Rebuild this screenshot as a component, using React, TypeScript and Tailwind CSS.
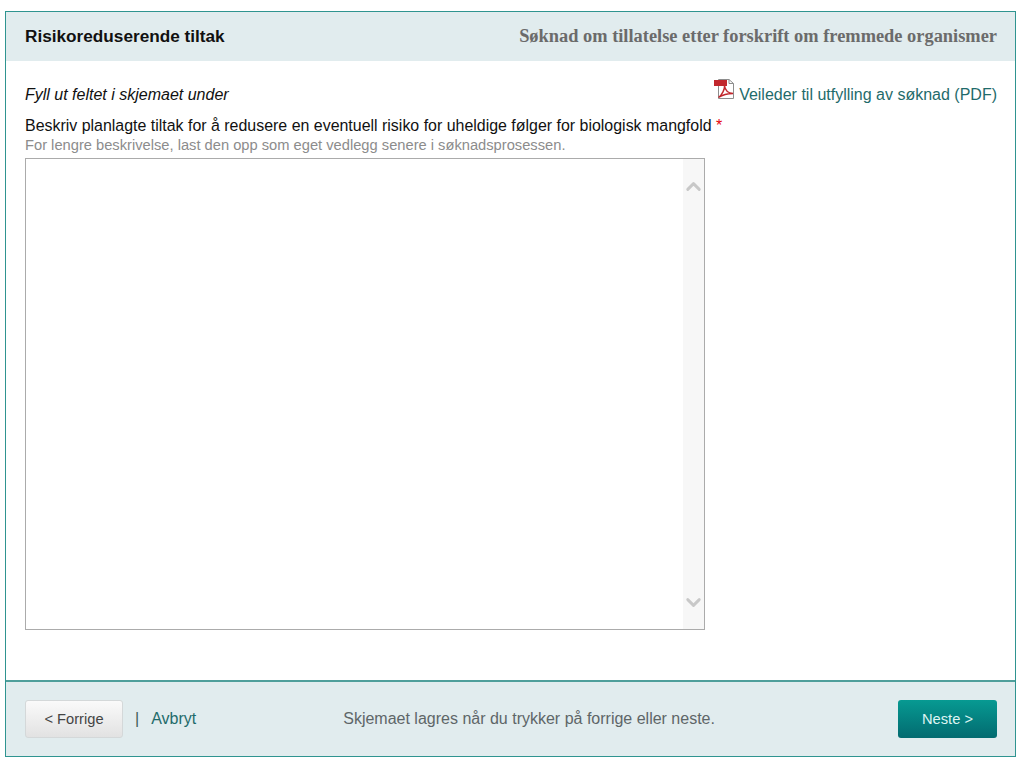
import { ChevronDown, ChevronUp } from "lucide-react";

function PdfIcon() {
  return (
    <svg className="shrink-0" width="21" height="22" viewBox="0 0 21 22" fill="none">
      <path d="M4.5 1.5H15L19.5 5.5V20.5H4.5Z" fill="#fff" stroke="#8d8d8d" />
      <path d="M15 1.5V5.5H19.5" stroke="#8d8d8d" />
      <rect x="0" y="2" width="13" height="6" fill="#c1272d" />
      <path
        d="M4.5 19.5C8 17 11 11 10.5 7.5C11 12 13.5 15 19 15.5C14 15.5 9 16.5 4.5 19.5Z"
        fill="none"
        stroke="#c1272d"
        strokeWidth="1.4"
      />
    </svg>
  );
}

export default function App() {
  return (
    <main className="min-h-[767px] bg-white pt-[11px] pr-2 pb-[10px] pl-[5px] font-['Liberation_Sans',Arial,sans-serif] text-base">
      <div className="flex h-[746px] flex-col border border-[#2f9490]">
        <header className="flex h-[49px] items-center justify-between bg-[#e1ecee] pr-[18px] pl-[19px]">
          <h1 className="text-[17.2px] font-bold text-[#111]">Risikoreduserende tiltak</h1>
          <p className="font-['Liberation_Serif',serif] text-[18.4px] font-bold text-[#6b6b6b]">
            Søknad om tillatelse etter forskrift om fremmede organismer
          </p>
        </header>

        <section className="flex-1 pr-[18px] pl-[19px] pt-[17px]">
          <div className="flex h-[32px] items-start justify-between">
            <p className="pt-[8px] text-[#111] italic leading-[18px]">Fyll ut feltet i skjemaet under</p>
            <a className="flex items-start gap-[4px] text-[#1f6b6b]" href="#">
              <PdfIcon />
              <span className="pt-[8px] leading-[18px]">Veileder til utfylling av søknad (PDF)</span>
            </a>
          </div>
          <label className="mt-[7px] block text-[15.95px] leading-[18px] text-[#111]" htmlFor="tiltak">
            Beskriv planlagte tiltak for å redusere en eventuell risiko for uheldige følger for biologisk mangfold{" "}
            <span className="text-red-600">*</span>
          </label>
          <p className="mt-[1px] text-[14.7px] leading-[18px] text-[#8c8c8c]">
            For lengre beskrivelse, last den opp som eget vedlegg senere i søknadsprosessen.
          </p>
          <div className="mt-[4px] flex h-[472px] w-[680px] border border-[#ababab]">
            <textarea className="flex-1 resize-none outline-none" id="tiltak" />
            <div className="flex w-[21px] flex-col items-center justify-between bg-[#f7f7f7] pt-[16px] pb-[15px]">
              <ChevronUp size={23} strokeWidth={3} className="text-[#c8c8c8]" />
              <ChevronDown size={23} strokeWidth={3} className="text-[#c8c8c8]" />
            </div>
          </div>
        </section>

        <footer className="flex h-[76px] items-center border-t-2 border-[#4f9f9b] bg-[#e1ecee] pr-[18px] pl-[19px]">
          <button className="h-[38px] w-[98px] rounded-[3px] border border-[#d4d8d9] bg-gradient-to-b from-[#fafafa] to-[#e2e2e2] text-[14.7px] text-[#444]">
            {"< Forrige"}
          </button>
          <span className="ml-[12px] text-[#3f5f55]">|</span>
          <a className="ml-[12px] text-[#1f6b6b]" href="#">
            Avbryt
          </a>
          <p className="ml-[147px] flex-1 text-[#5e6668]">Skjemaet lagres når du trykker på forrige eller neste.</p>
          <button className="h-[38px] w-[99px] rounded-[3px] bg-gradient-to-b from-[#079a92] to-[#036b70] text-[14.7px] text-[#dff5f3]">
            {"Neste >"}
          </button>
        </footer>
      </div>
    </main>
  );
}
